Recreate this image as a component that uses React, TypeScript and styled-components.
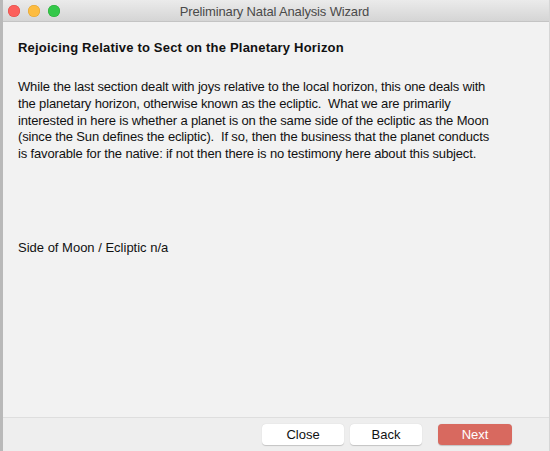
import { createGlobalStyle, styled } from 'styled-components'

const Global = createGlobalStyle`
    html, body {
        margin: 0;
        padding: 0;
        background: #ffffff;
    }
    body {
        font-family: "Liberation Sans", Arial, sans-serif;
        -webkit-font-smoothing: antialiased;
    }
`;

const Window = styled.div`
    width: 550px;
    height: 451px;
    display: flex;
    flex-direction: column;
    box-sizing: border-box;
    border-left: 3px solid #b9b9b9;
    border-right: 1px solid #d6d6d6;
    background: #f2f2f2;
    overflow: hidden;
`;

const TitleBar = styled.div`
    height: 22px;
    flex: none;
    display: flex;
    align-items: center;
    position: relative;
    background: linear-gradient(#ebebeb, #d5d5d5);
    border-bottom: 1px solid #c4c4c4;
    box-sizing: border-box;
    margin-left: -3px;
    padding-left: 8px;
`;

const Lights = styled.div`
    display: flex;
    gap: 8px;
`;

const Light = styled.span<{ $color: string; $edge: string }>`
    width: 12px;
    height: 12px;
    border-radius: 50%;
    background: ${p => p.$color};
    box-shadow: inset 0 0 0 0.5px ${p => p.$edge};
`;

const Title = styled.div`
    position: absolute;
    left: 0;
    right: 0;
    top: 4px;
    text-align: center;
    font-size: 13px;
    letter-spacing: -0.15px;
    color: #4a4a4a;
    pointer-events: none;
`;

const Content = styled.div`
    flex: 1;
    padding: 18px 15px 0 15px;
    color: #111;
    font-size: 13px;
    border-bottom: 1px solid #dedede;
`;

const Heading = styled.h1`
    margin: 0 0 23px 0;
    font-size: 13px;
    font-weight: 700;
    letter-spacing: 0.2px;
    line-height: 16px;
`;

const Paragraph = styled.p`
    margin: 0 0 77px 0;
    line-height: 16.8px;
    letter-spacing: -0.15px;
`;

const Field = styled.div`
    line-height: 16px;
`;

const Footer = styled.div`
    height: 33px;
    flex: none;
    display: flex;
    justify-content: flex-end;
    align-items: center;
    gap: 6px;
    padding-right: 37px;
    background: #eeeeee;
`;

const Button = styled.button<{ $primary?: boolean; $w: number }>`
    width: ${p => p.$w}px;
    height: 21px;
    margin-left: ${p => (p.$primary ? 10 : 0)}px;
    border: none;
    border-radius: 4px;
    font-family: "Liberation Sans", Arial, sans-serif;
    font-size: 13px;
    color: ${p => (p.$primary ? '#ffffff' : '#111')};
    background: ${p => (p.$primary ? '#d8695f' : '#ffffff')};
    box-shadow: 0 0.5px 1px rgba(0, 0, 0, 0.18);
    padding: 0;
`;

export default function App() {
    return (
        <>
            <Global />
            <Window>
                <TitleBar>
                    <Lights>
                        <Light $color="#fc605c" $edge="#de4a44" />
                        <Light $color="#fdbc40" $edge="#dea030" />
                        <Light $color="#34c84a" $edge="#27aa35" />
                    </Lights>
                    <Title>Preliminary Natal Analysis Wizard</Title>
                </TitleBar>
                <Content>
                    <Heading>Rejoicing Relative to Sect on the Planetary Horizon</Heading>
                    <Paragraph>
                        While the last section dealt with joys relative to the local horizon, this one deals with<br />
                        the planetary horizon, otherwise known as the ecliptic.&nbsp; What we are primarily<br />
                        interested in here is whether a planet is on the same side of the ecliptic as the Moon<br />
                        (since the Sun defines the ecliptic).&nbsp; If so, then the business that the planet conducts<br />
                        is favorable for the native: if not then there is no testimony here about this subject.
                    </Paragraph>
                    <Field>Side of Moon / Ecliptic n/a</Field>
                </Content>
                <Footer>
                    <Button $w={82}>Close</Button>
                    <Button $w={72}>Back</Button>
                    <Button $w={74} $primary>Next</Button>
                </Footer>
            </Window>
        </>
    )
}
